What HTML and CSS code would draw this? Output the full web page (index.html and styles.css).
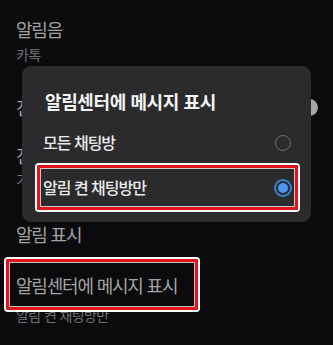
FILE: index.html
```html
<!DOCTYPE html>
<html lang="ko">
<head>
<meta charset="utf-8">
<link rel="stylesheet" href="styles.css">
</head>
<body>
<div class="screen">
  <div class="list">
    <div class="title t1">알림음</div>
    <div class="sub s1">카톡</div>
    <div class="row r1">
      <div class="title">진동</div>
      <div class="thumb"></div>
    </div>
    <div class="title t3">진동</div>
    <div class="sub s3">기본</div>
    <div class="title t4">알림 표시</div>
    <div class="title t5">알림센터에 메시지 표시
      <div class="mark mark-bg"></div>
    </div>
    <div class="sub s5">알림 켠 채팅방만</div>
  </div>

  <div class="dialog">
    <div class="dlg-title">알림센터에 메시지 표시</div>
    <div class="opt">
      <span>모든 채팅방</span>
      <span class="radio"></span>
    </div>
    <div class="opt opt-marked">
      <span>알림 켠 채팅방만</span>
      <span class="radio on"></span>
    </div>
  </div>
</div>
</body>
</html>
```
FILE: styles.css
```css
* { box-sizing: border-box; }
html, body { margin: 0; padding: 0; }
body {
  width: 333px;
  height: 345px;
  overflow: hidden;
  background: #0b0b0d;
  font-family: "Noto Sans CJK KR", "Noto Sans", sans-serif;
}
.screen { position: relative; width: 333px; height: 345px; }
.list { padding-left: 16px; padding-top: 18px; }
.title {
  font-size: 18px;
  line-height: 22px;
  color: #a2a2a4;
  letter-spacing: -1.2px;
}
.sub {
  font-size: 14px;
  line-height: 18px;
  color: #707072;
  letter-spacing: -0.6px;
}
.s1 { margin-top: 5px; }
.r1 {
  display: flex;
  justify-content: space-between;
  align-items: center;
  margin-top: 33px;
  padding-right: 15px;
}
.thumb {
  width: 17px;
  height: 17px;
  border-radius: 50%;
  background: #a5a5a7;
}
.t3 { margin-top: 26px; }
.s3 { margin-top: 4px; }
.t4 { margin-top: 35px; }
.t5 { margin-top: 29px; position: relative; }
.s5 { margin-top: 10px; }

.mark {
  position: absolute;
  border: 3px solid #e3131b;
  border-radius: 2px;
  box-shadow: 0 0 0 2px #fafafa, inset 0 0 0 1px rgba(255,255,255,0.75);
}
.mark-bg {
  left: -10px;
  top: -15px;
  width: 192px;
  height: 51px;
}

.dialog {
  position: absolute;
  left: 22px;
  top: 66px;
  width: 289px;
  height: 156px;
  background: #2b2b2d;
  border-radius: 9px;
  padding: 24px 13px 12px 15px;
}
.dlg-title {
  font-size: 18px;
  line-height: 22px;
  font-weight: 700;
  color: #f4f4f4;
  letter-spacing: -0.4px;
  margin-bottom: 8px;
  padding-left: 8px;
}
.opt {
  display: flex;
  justify-content: space-between;
  align-items: center;
  height: 45px;
  padding: 0 4px 0 3px;
  border: 3px solid transparent;
  border-radius: 2px;
  font-size: 16px;
  font-weight: 500;
  color: #ececec;
  letter-spacing: -1px;
}
.opt span:first-child { padding-bottom: 2px; }
.opt-marked {
  border-color: #e3131b;
  box-shadow: 0 0 0 2px #fafafa, inset 0 0 0 1px rgba(255,255,255,0.75);
}
.radio {
  width: 16px;
  height: 16px;
  border-radius: 50%;
  border: 1.5px solid #6d6d6f;
  flex: none;
}
.radio.on {
  width: 18px;
  height: 18px;
  margin-right: -1px;
  border: 2px solid #3a7fd6;
  padding: 2px;
  background: #4c97ec;
  background-clip: content-box;
}
```
